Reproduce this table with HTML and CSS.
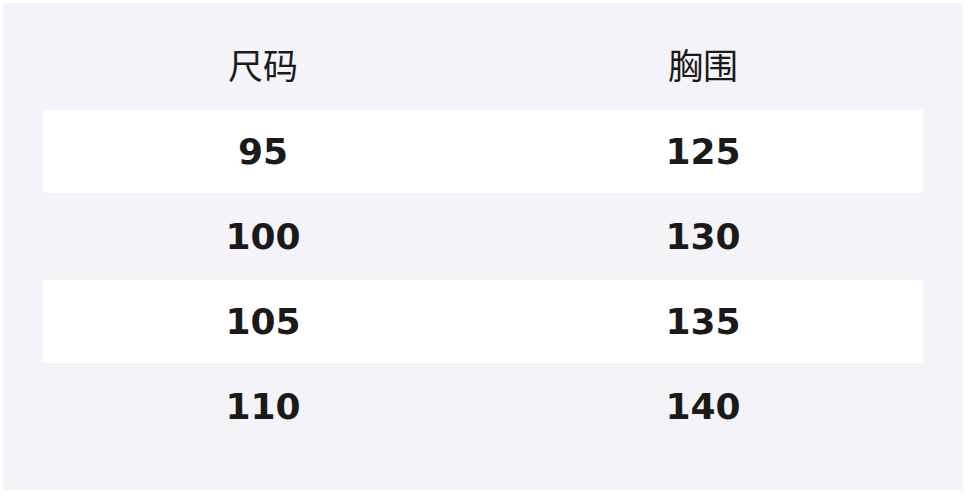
FILE: index.html
```html
<!DOCTYPE html>
<html lang="zh">
<head>
<meta charset="utf-8">
<link rel="stylesheet" href="styles.css">
</head>
<body>
<div class="panel">
  <div class="table">
    <div class="row head"><div class="cell">尺码</div><div class="cell">胸围</div></div>
    <div class="row alt"><div class="cell">95</div><div class="cell">125</div></div>
    <div class="row"><div class="cell">100</div><div class="cell">130</div></div>
    <div class="row alt"><div class="cell">105</div><div class="cell">135</div></div>
    <div class="row"><div class="cell">110</div><div class="cell">140</div></div>
  </div>
</div>
</body>
</html>
```
FILE: styles.css
```css
html, body {
  margin: 0;
  padding: 0;
  background: #ffffff;
}
body {
  width: 966px;
  height: 493px;
  overflow: hidden;
}
.panel {
  margin: 3px;
  width: 960px;
  height: 487px;
  box-sizing: border-box;
  padding: 22px 40px 40px;
  background: #f4f4f8;
  border-radius: 3px;
}
.table {
  display: flex;
  flex-direction: column;
  gap: 2px;
}
.row {
  display: grid;
  grid-template-columns: 1fr 1fr;
  height: 83px;
  border-radius: 3px;
}
.row.alt {
  background: #ffffff;
}
.cell {
  display: flex;
  align-items: center;
  justify-content: center;
  font-family: "DejaVu Sans", "Noto Sans CJK SC", sans-serif;
  font-size: 36px;
  font-weight: 700;
  color: #1a1a1a;
}
.row.head .cell {
  font-weight: 400;
  font-family: "Noto Sans CJK SC", sans-serif;
  font-size: 35px;
  padding-bottom: 7px;
}
```
